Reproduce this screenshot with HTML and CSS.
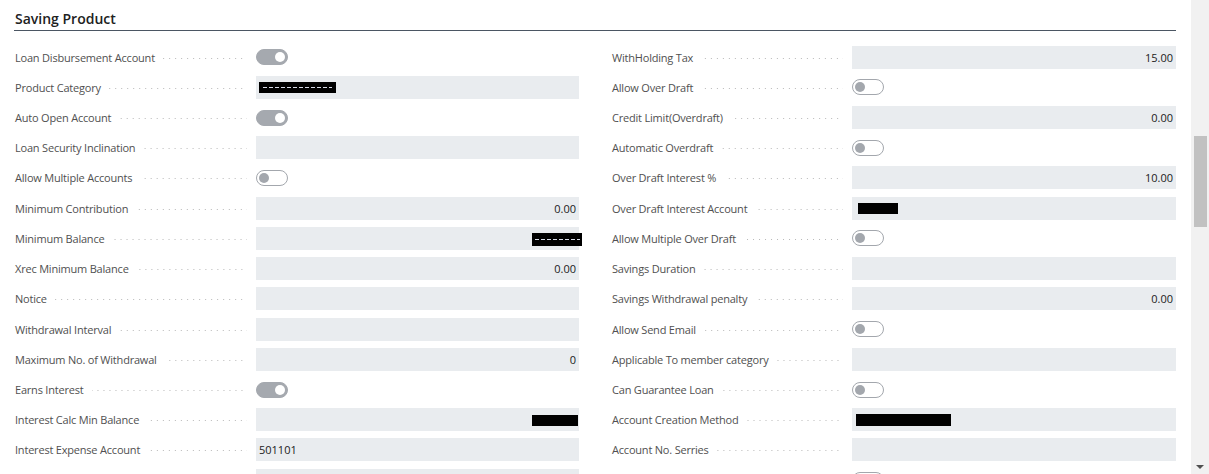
FILE: index.html
```html
<!DOCTYPE html>
<html>
<head>
<meta charset="utf-8">
<link rel="stylesheet" href="styles.css">
</head>
<body>
<div class="page">
  <main class="content">
    <h2 class="title">Saving Product</h2>
    <div class="form">
      <div class="col">
        <div class="row"><div class="lbl"><span>Loan Disbursement Account</span><i class="dots"></i></div><div class="ctl"><span class="tg on"></span></div></div>
        <div class="row"><div class="lbl"><span>Product Category</span><i class="dots"></i></div><div class="fld"><span class="red red-pc"><b></b></span></div></div>
        <div class="row"><div class="lbl"><span>Auto Open Account</span><i class="dots"></i></div><div class="ctl"><span class="tg on"></span></div></div>
        <div class="row"><div class="lbl"><span>Loan Security Inclination</span><i class="dots"></i></div><div class="fld"></div></div>
        <div class="row"><div class="lbl"><span>Allow Multiple Accounts</span><i class="dots"></i></div><div class="ctl"><span class="tg"></span></div></div>
        <div class="row"><div class="lbl"><span>Minimum Contribution</span><i class="dots"></i></div><div class="fld num">0.00</div></div>
        <div class="row"><div class="lbl"><span>Minimum Balance</span><i class="dots"></i></div><div class="fld num"><span class="red red-mb"><b></b></span></div></div>
        <div class="row"><div class="lbl"><span>Xrec Minimum Balance</span><i class="dots"></i></div><div class="fld num">0.00</div></div>
        <div class="row"><div class="lbl"><span>Notice</span><i class="dots"></i></div><div class="fld"></div></div>
        <div class="row"><div class="lbl"><span>Withdrawal Interval</span><i class="dots"></i></div><div class="fld"></div></div>
        <div class="row"><div class="lbl"><span>Maximum No. of Withdrawal</span><i class="dots"></i></div><div class="fld num">0</div></div>
        <div class="row"><div class="lbl"><span>Earns Interest</span><i class="dots"></i></div><div class="ctl"><span class="tg on"></span></div></div>
        <div class="row"><div class="lbl"><span>Interest Calc Min Balance</span><i class="dots"></i></div><div class="fld num"><span class="red red-ic"></span></div></div>
        <div class="row"><div class="lbl"><span>Interest Expense Account</span><i class="dots"></i></div><div class="fld">501101</div></div>
        <div class="row"><div class="lbl"><span>&nbsp;</span></div><div class="fld"></div></div>
      </div>
      <div class="col right">
        <div class="row"><div class="lbl"><span>WithHolding Tax</span><i class="dots"></i></div><div class="fld num">15.00</div></div>
        <div class="row"><div class="lbl"><span>Allow Over Draft</span><i class="dots"></i></div><div class="ctl"><span class="tg"></span></div></div>
        <div class="row"><div class="lbl"><span>Credit Limit(Overdraft)</span><i class="dots"></i></div><div class="fld num">0.00</div></div>
        <div class="row"><div class="lbl"><span>Automatic Overdraft</span><i class="dots"></i></div><div class="ctl"><span class="tg"></span></div></div>
        <div class="row"><div class="lbl"><span>Over Draft Interest %</span><i class="dots"></i></div><div class="fld num">10.00</div></div>
        <div class="row"><div class="lbl"><span>Over Draft Interest Account</span><i class="dots"></i></div><div class="fld"><span class="red red-od"></span></div></div>
        <div class="row"><div class="lbl"><span>Allow Multiple Over Draft</span><i class="dots"></i></div><div class="ctl"><span class="tg"></span></div></div>
        <div class="row"><div class="lbl"><span>Savings Duration</span><i class="dots"></i></div><div class="fld"></div></div>
        <div class="row"><div class="lbl"><span>Savings Withdrawal penalty</span><i class="dots"></i></div><div class="fld num">0.00</div></div>
        <div class="row"><div class="lbl"><span>Allow Send Email</span><i class="dots"></i></div><div class="ctl"><span class="tg"></span></div></div>
        <div class="row"><div class="lbl"><span>Applicable To member category</span><i class="dots"></i></div><div class="fld"></div></div>
        <div class="row"><div class="lbl"><span>Can Guarantee Loan</span><i class="dots"></i></div><div class="ctl"><span class="tg"></span></div></div>
        <div class="row"><div class="lbl"><span>Account Creation Method</span><i class="dots"></i></div><div class="fld"><span class="red red-ac"></span></div></div>
        <div class="row"><div class="lbl"><span>Account No. Serries</span><i class="dots"></i></div><div class="fld"></div></div>
        <div class="row"><div class="lbl"><span>&nbsp;</span></div><div class="ctl"><span class="tg"></span></div></div>
      </div>
    </div>
  </main>
  <aside class="scrollbar">
    <div class="thumb"></div>
    <div class="spacer"></div>
    <div class="arrow"></div>
  </aside>
</div>
</body>
</html>
```
FILE: styles.css
```css
* { box-sizing: border-box; }
html, body {
  margin: 0;
  padding: 0;
  width: 1209px;
  height: 474px;
  overflow: hidden;
  background: #ffffff;
  font-family: "Open Sans", "Noto Sans", "Liberation Sans", sans-serif;
}
.page {
  display: flex;
  width: 1209px;
  height: 474px;
}
.content {
  flex: 1;
  padding: 0 15px 0 15px;
  overflow: hidden;
}
.title {
  margin: 0 0 0 -1px;
  padding: 9px 0 0 1px;
  height: 31px;
  font-size: 14px;
  font-weight: 600;
  color: #212121;
  border-bottom: 1px solid #4b5663;
  line-height: 20px;
}
.form {
  display: grid;
  grid-template-columns: 564px 565px;
  column-gap: 32px;
  margin-top: 11px;
}
.col {
  display: flex;
  flex-direction: column;
}
.row {
  height: 30.23px;
  display: flex;
  align-items: center;
  flex-shrink: 0;
}
.lbl {
  width: 241px;
  flex-shrink: 0;
  display: flex;
  align-items: center;
  font-size: 11px;
  letter-spacing: -0.2px;
  color: #505050;
  white-space: nowrap;
}
.right .lbl { padding-left: 1px; }
.dots {
  flex: 1;
  height: 1px;
  margin: 2px 9px 0 8px;
  background-image: linear-gradient(to right, #b8b8b8 1px, transparent 1px);
  background-size: 6px 1px;
  background-repeat: repeat-x;
  background-position: right 0;
}
.fld {
  flex: 1;
  height: 23px;
  background: #e9ecef;
  font-size: 11px;
  color: #212121;
  display: flex;
  align-items: center;
  padding: 0 3px;
}
.fld.num { justify-content: flex-end; }
.ctl {
  flex: 1;
  height: 23px;
  display: flex;
  align-items: center;
}
.tg {
  width: 32px;
  height: 16px;
  border-radius: 8px;
  border: 1px solid #a3a7ad;
  background: #ffffff;
  display: flex;
  align-items: center;
  padding: 0 2px;
}
.tg::after {
  content: "";
  width: 10px;
  height: 10px;
  border-radius: 50%;
  background: #a3a7ad;
}
.tg.on {
  background: #a5a9af;
  border-color: #a5a9af;
  justify-content: flex-end;
}
.tg.on::after { background: #ffffff; }
.red {
  display: flex;
  align-items: center;
  justify-content: center;
  background: #000;
  height: 11px;
}
.red b {
  display: block;
  height: 1px;
  width: 90%;
  background-image: linear-gradient(to right, #d8dce8 4px, transparent 4px);
  background-size: 6px 1px;
}
.red-pc { width: 77px; margin-top: 0; }
.red-mb { width: 50px; height: 13px; margin-right: -6px; margin-top: 2px; }
.red-ic { width: 46px; height: 11px; margin-top: 1px; margin-right: -2px; }
.red-od { width: 40px; height: 11px; margin-left: 3px; }
.red-ac { width: 95px; height: 12px; margin-left: 1px; }
.scrollbar {
  width: 18px;
  flex-shrink: 0;
  background: #f1f1f1;
  display: flex;
  flex-direction: column;
  align-items: center;
}
.thumb {
  width: 13px;
  height: 91px;
  margin-top: 136px;
  margin-left: 1px;
  background: #c1c1c1;
}
.spacer { flex: 1; }
.arrow {
  width: 0;
  height: 0;
  border-left: 4px solid transparent;
  border-right: 4px solid transparent;
  border-top: 4px solid #505050;
  margin-bottom: 5px;
}
```
